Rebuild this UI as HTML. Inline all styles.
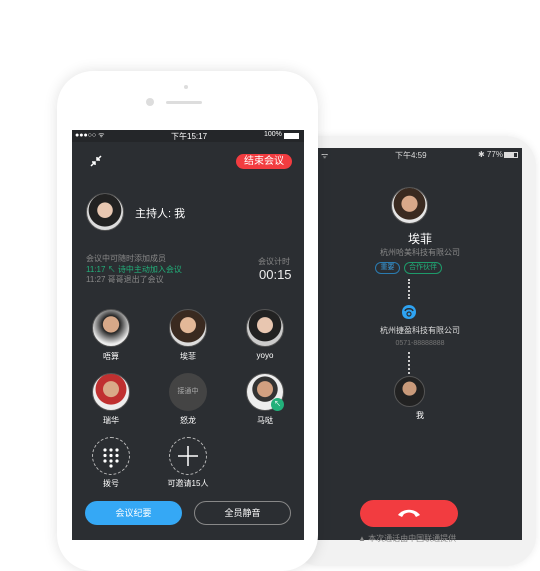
<!DOCTYPE html>
<html><head><meta charset="utf-8"><style>
*{margin:0;padding:0;box-sizing:border-box}
body{width:540px;height:540px;overflow:hidden;background:#fff;position:relative;font-family:"Liberation Sans","Noto Sans CJK SC",sans-serif;color:#fff}
.abs{position:absolute}
.av{position:absolute;border-radius:50%;overflow:hidden;border:1px solid #555}
.t{position:absolute;white-space:nowrap}
</style></head><body>
<!-- phone 2 -->
<div class="abs" style="left:290px;top:136px;width:246px;height:430px;background:#f2f2f2;border-radius:30px;box-shadow:0 0 8px rgba(0,0,0,.08)"></div>
<div class="abs" style="left:305px;top:148px;width:217px;height:392px;background:#2b2e32"></div>
<div class="t" style="left:318px;top:150px;width:204px;font-size:8px;color:#ddd">
 <span class="abs" style="left:3px">ᯤ</span><span class="abs" style="left:77px">下午4:59</span><span class="abs" style="left:160px">✱ 77%</span><span class="abs" style="left:186px;top:2px;width:14px;height:6px;border:1px solid #ddd"><span class="abs" style="left:0;top:0;width:9px;height:4px;background:#ddd"></span></span>
</div>
<div class="av" style="left:391px;top:187px;width:37px;height:37px;background:radial-gradient(circle at 50% 45%,#d9a98a 0 30%,#3a2a20 32% 60%,#e6e6e6 62%)"></div>
<div class="t" style="left:318px;top:230px;width:204px;text-align:center;font-size:12px">埃菲</div>
<div class="t" style="left:318px;top:247px;width:204px;text-align:center;font-size:8px;color:#888">杭州哈美科技有限公司</div>
<div class="t" style="left:375px;top:262px;width:25px;height:12px;border:1px solid #2a7bb0;border-radius:6px;font-size:7px;color:#3a98d6;text-align:center;line-height:10px">重要</div>
<div class="t" style="left:404px;top:262px;width:38px;height:12px;border:1px solid #1e9a6a;border-radius:6px;font-size:7px;color:#22b07a;text-align:center;line-height:10px">合作伙伴</div>
<div class="abs" style="left:408px;top:279px;width:2px;height:20px;border-left:2px dotted #ccc"></div>
<svg class="abs" style="left:400px;top:304px" width="18" height="16"><path d="M2 8 C2 3 6 1 9 1 C12 1 16 3 16 8 C16 13 12 15 9 15 C5 15 2 13 2 8Z" fill="#2ea3f2"/><path d="M5 7 C6 4 12 4 13 7" stroke="#2b2e32" stroke-width="1.5" fill="none"/><circle cx="9" cy="10" r="2" fill="none" stroke="#2b2e32" stroke-width="1.2"/></svg>
<div class="t" style="left:318px;top:325px;width:204px;text-align:center;font-size:8px;color:#ddd">杭州捷盈科技有限公司</div>
<div class="t" style="left:318px;top:340px;width:204px;text-align:center;font-size:7px;color:#777">0571-88888888</div>
<div class="abs" style="left:408px;top:352px;width:2px;height:22px;border-left:2px dotted #ccc"></div>
<div class="av" style="left:394px;top:376px;width:31px;height:31px;background:radial-gradient(circle at 50% 40%,#c99a7a 0 30%,#222 32% 100%)"></div>
<div class="t" style="left:318px;top:410px;width:204px;text-align:center;font-size:8px">我</div>
<div class="abs" style="left:360px;top:500px;width:98px;height:27px;background:#f23c40;border-radius:14px"></div>
<svg class="abs" style="left:397px;top:508px" width="24" height="10"><path d="M1 7 C6 0 18 0 23 7 L19 9 L17 6 C13 4 11 4 7 6 L5 9Z" fill="#fff"/></svg>
<div class="t" style="left:358px;top:533px;font-size:8px;color:#888">▲ 本次通话由中国联通提供</div>

<!-- phone 1 -->
<div class="abs" style="left:57px;top:71px;width:261px;height:500px;background:#fff;border-radius:36px;box-shadow:0 0 14px rgba(0,0,0,.12)"></div>
<div class="abs" style="left:146px;top:98px;width:8px;height:8px;border-radius:50%;background:#ddd"></div>
<div class="abs" style="left:166px;top:101px;width:36px;height:3px;border-radius:2px;background:#ddd"></div>
<div class="abs" style="left:184px;top:85px;width:4px;height:4px;border-radius:50%;background:#ddd"></div>
<div class="abs" style="left:72px;top:130px;width:232px;height:410px;background:#2b2e32"></div>
<div class="abs" style="left:72px;top:130px;width:232px;height:12px;background:#242629"></div>
<div class="t" style="left:75px;top:131px;font-size:7px;color:#fff">●●●○○ ᯤ</div>
<div class="t" style="left:171px;top:131px;font-size:8px">下午15:17</div>
<div class="t" style="left:264px;top:131px;font-size:7px">100%</div>
<div class="abs" style="left:284px;top:133px;width:15px;height:6px;background:#fff"></div>
<svg class="abs" style="left:90px;top:155px" width="12" height="12"><path d="M11 1 L7 5 M7 2 V5 H10 M1 11 L5 7 M2 7 H5 V10" stroke="#fff" stroke-width="1.5" fill="none"/></svg>
<div class="t" style="left:236px;top:154px;width:56px;height:15px;background:#f23c40;border-radius:8px;font-size:10px;text-align:center;line-height:15px">结束会议</div>
<div class="av" style="left:86px;top:193px;width:38px;height:38px;background:radial-gradient(circle at 50% 45%,#e9c8b2 0 28%,#222 30% 60%,#ddd 62%)"></div>
<div class="t" style="left:135px;top:205px;font-size:11px">主持人: 我</div>
<div class="t" style="left:86px;top:253px;font-size:8px;color:#888">会议中可随时添加成员</div>
<div class="t" style="left:86px;top:264px;font-size:8px;color:#22b07a">11:17 ↖ 诗中主动加入会议</div>
<div class="t" style="left:86px;top:274px;font-size:8px;color:#888">11:27 哥哥退出了会议</div>
<div class="t" style="left:258px;top:256px;font-size:8px;color:#888">会议计时</div>
<div class="t" style="left:259px;top:267px;font-size:13px;color:#eee">00:15</div>

<div class="av" style="left:92px;top:309px;width:38px;height:38px;background:radial-gradient(circle at 50% 40%,#d7a888 0 28%,#222 30%,#eee 70%)"></div>
<div class="av" style="left:169px;top:309px;width:38px;height:38px;background:radial-gradient(circle at 50% 42%,#e3b898 0 28%,#3a2a20 30% 62%,#ddd 64%)"></div>
<div class="av" style="left:246px;top:309px;width:38px;height:38px;background:radial-gradient(circle at 50% 42%,#e8c6b0 0 28%,#222 30% 58%,#ccc 60%)"></div>
<div class="t" style="left:92px;top:351px;width:38px;text-align:center;font-size:8px">唔算</div>
<div class="t" style="left:169px;top:351px;width:38px;text-align:center;font-size:8px">埃菲</div>
<div class="t" style="left:246px;top:351px;width:38px;text-align:center;font-size:8px">yoyo</div>
<div class="av" style="left:92px;top:373px;width:38px;height:38px;background:radial-gradient(circle at 50% 42%,#d9aa88 0 28%,#c03030 30% 55%,#eee 57%)"></div>
<div class="av" style="left:169px;top:373px;width:38px;height:38px;background:#444;border:none;font-size:7px;color:#aaa;text-align:center;line-height:38px">接通中</div>
<div class="av" style="left:246px;top:373px;width:38px;height:38px;background:radial-gradient(circle at 50% 42%,#d2a080 0 28%,#333 30% 45%,#eee 47%)"></div>
<div class="abs" style="left:271px;top:398px;width:13px;height:13px;border-radius:50%;background:#22b07a;font-size:7px;text-align:center;line-height:13px">↖</div>
<div class="t" style="left:92px;top:415px;width:38px;text-align:center;font-size:8px">瑞华</div>
<div class="t" style="left:169px;top:415px;width:38px;text-align:center;font-size:8px">怒龙</div>
<div class="t" style="left:246px;top:415px;width:38px;text-align:center;font-size:8px">马哒</div>
<div class="abs" style="left:92px;top:437px;width:38px;height:38px;border-radius:50%;border:1px dashed #bbb"></div>
<svg class="abs" style="left:92px;top:437px" width="38" height="38"><g fill="#fff"><circle cx="13" cy="13" r="1.6"/><circle cx="19" cy="13" r="1.6"/><circle cx="25" cy="13" r="1.6"/><circle cx="13" cy="18.5" r="1.6"/><circle cx="19" cy="18.5" r="1.6"/><circle cx="25" cy="18.5" r="1.6"/><circle cx="13" cy="24" r="1.6"/><circle cx="19" cy="24" r="1.6"/><circle cx="25" cy="24" r="1.6"/><circle cx="19" cy="29" r="1.6"/></g></svg>
<div class="abs" style="left:169px;top:437px;width:38px;height:38px;border-radius:50%;border:1px dashed #bbb"></div>
<svg class="abs" style="left:169px;top:437px" width="38" height="38"><path d="M19 9v20M9 19h20" stroke="#fff" stroke-width="1.5"/></svg>
<div class="t" style="left:92px;top:478px;width:38px;text-align:center;font-size:8px">拨号</div>
<div class="t" style="left:158px;top:478px;width:60px;text-align:center;font-size:8px">可邀请15人</div>
<div class="t" style="left:85px;top:501px;width:97px;height:24px;background:#35a8f5;border-radius:12px;font-size:9px;text-align:center;line-height:24px">会议纪要</div>
<div class="t" style="left:194px;top:501px;width:97px;height:24px;border:1px solid #888;border-radius:12px;font-size:9px;text-align:center;line-height:22px">全员静音</div>
</body></html>
